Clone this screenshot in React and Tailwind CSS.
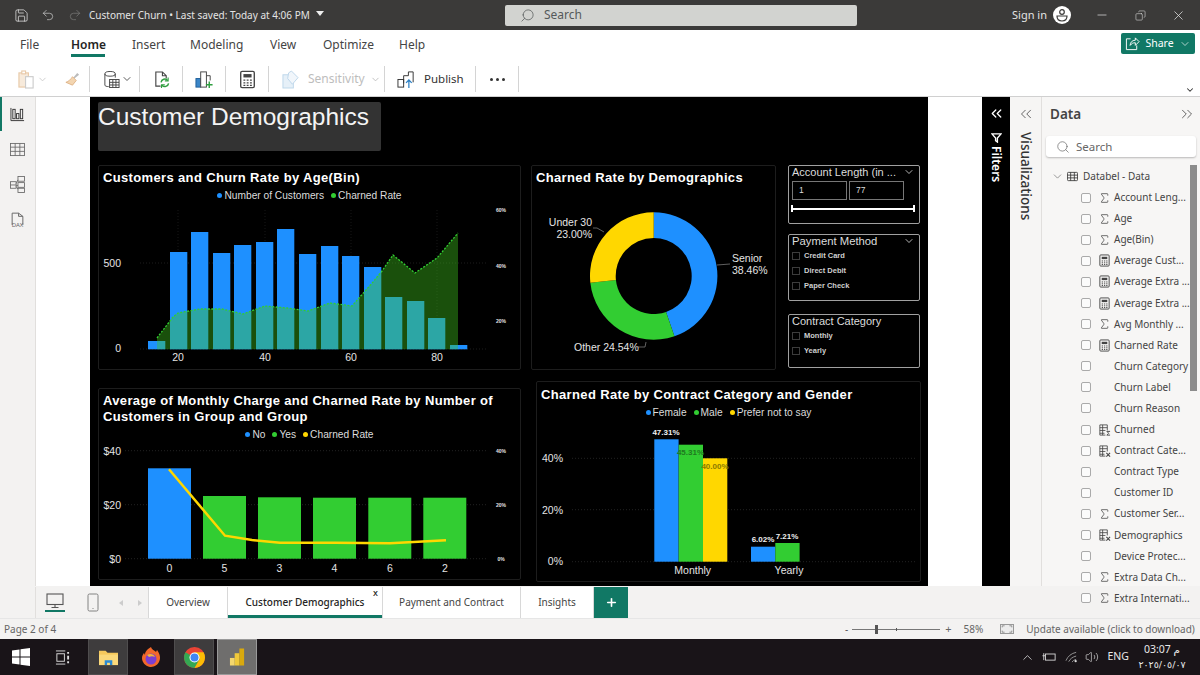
import { ChevronDown, ChevronUp, ChevronsLeft, ChevronsRight, Copy, Minus, Plus, Redo2, Save, Search, Sigma, Undo2, Volume2, X } from 'lucide-react';

const BLUE = '#1e90ff';
const GREEN = '#32cd32';
const YELLOW = '#ffd700';

const ageBars = [
  [148, 341], [170, 252], [191, 232], [213, 253], [234, 245], [256, 242], [277, 229], [299, 254],
  [321, 246], [342, 256], [364, 267], [385, 297], [407, 301], [428, 318], [450, 345],
];
const areaPoints = [
  [157, 338], [173, 317], [178, 313], [200, 309], [222, 309], [243, 314], [265, 306], [287, 308],
  [308, 311], [330, 303], [352, 306], [373, 282], [382, 271], [393, 255], [415, 273], [437, 258], [458, 233],
];
const dataFields = [
  ['sigma', 'Account Leng...'], ['sigma', 'Age'], ['sigma', 'Age(Bin)'], ['calc', 'Average Cust...'],
  ['calc', 'Average Extra ...'], ['calc', 'Average Extra ...'], ['sigma', 'Avg Monthly ...'], ['calc', 'Charned Rate'],
  ['', 'Churn Category'], ['', 'Churn Label'], ['', 'Churn Reason'], ['sigmaTable', 'Churned'],
  ['fx', 'Contract Cate...'], ['', 'Contract Type'], ['', 'Customer ID'], ['sigma', 'Customer Ser...'],
  ['fx', 'Demographics'], ['', 'Device Protec...'], ['sigma', 'Extra Data Ch...'], ['sigma', 'Extra Internati...'],
];

/* ---------- small drawn icons ---------- */

function CalcIcon({ className = 'w-[13px] h-[13px]' }) {
  return (
    <svg viewBox="0 0 14 14" className={className} fill="none" stroke="#444" strokeWidth="1">
      <rect x="2" y="1" width="10" height="12" rx="1" />
      <rect x="4" y="3" width="6" height="2.5" fill="#444" stroke="none" />
      <path d="M4 7.5h1.4M6.4 7.5h1.4M8.8 7.5h1.4M4 9.5h1.4M6.4 9.5h1.4M8.8 9.5h1.4M4 11.3h1.4M6.4 11.3h1.4M8.8 11.3h1.4" />
    </svg>
  );
}

function FieldIcon({ kind }) {
  if (kind === 'sigma') return <Sigma className="w-[14px] h-[14px] text-[#444]" strokeWidth={1.4} />;
  if (kind === 'calc') return <CalcIcon />;
  if (kind === 'sigmaTable' || kind === 'fx') {
    return (
      <svg viewBox="0 0 14 14" className="w-[14px] h-[14px]" fill="none" stroke="#444" strokeWidth="0.9">
        <path d="M8 12.5H2V1.5h8v6M2 4.5h8M2 7.5h6M2 10.5h5M5 1.5v11" />
        {kind === 'fx'
          ? <path d="M9 13l4-4M9 9l4 4" strokeWidth="1.2" />
          : <path d="M13 8.5H9.5l2 2-2 2H13" strokeWidth="1" />}
      </svg>
    );
  }
  return null;
}

function ClipboardIcon() {
  return (
    <svg viewBox="0 0 18 20" className="w-[17px] h-[19px]" fill="none" stroke="#e8c9a8" strokeWidth="1.2">
      <rect x="1" y="3" width="10" height="15" fill="#f7eadb" />
      <rect x="8" y="7" width="8" height="12" fill="#fff" stroke="#ccc" />
      <rect x="4" y="1" width="4" height="3" fill="#fff" />
    </svg>
  );
}

function BrushIcon() {
  return (
    <svg viewBox="0 0 18 18" className="w-[17px] h-[17px]" fill="none">
      <path d="M10 7l4-5 2 2-5 4z" fill="#bbb" />
      <path d="M9 6l4 4-4 5-7-3c3-1 5-3 7-6z" fill="#f3d5b0" stroke="#d9a877" strokeWidth="0.8" />
    </svg>
  );
}

function DataIcon() {
  return (
    <svg viewBox="0 0 18 20" className="w-[17px] h-[19px]" fill="none" stroke="#444" strokeWidth="1">
      <path d="M2 4v12c0 1 2 1.5 4 1.500M13 4v4" />
      <ellipse cx="7.500" cy="4" rx="5.500" ry="2.500" />
      <rect x="7" y="10" width="10" height="8.500" fill="#fff" />
      <path d="M7 13h10M7 15.800h10M10.400 10v8.500M13.700 10v8.500" />
    </svg>
  );
}

function RefreshDocIcon() {
  return (
    <svg viewBox="0 0 18 20" className="w-[17px] h-[19px]" fill="none" strokeWidth="1.200">
      <path d="M8 17H3V2h7l4 4v3M10 2v4h4" stroke="#444" />
      <path d="M8.500 13a4 4 0 0 1 7-2M16.500 14a4 4 0 0 1-7 2" stroke="#2e9e3f" strokeWidth="1.500" />
      <path d="M16 8v3.500h-3.500M9 19v-3.500h3.500" stroke="#2e9e3f" />
    </svg>
  );
}

function NewVisualIcon() {
  return (
    <svg viewBox="0 0 20 20" className="w-[19px] h-[19px]" fill="none" strokeWidth="1">
      <rect x="1" y="9" width="5" height="9" fill="#3a86c8" stroke="#1f5f99" />
      <rect x="6" y="2" width="6" height="16" fill="#fff" stroke="#444" />
      <path d="M15 12v7M11.500 15.500h7" stroke="#2e9e3f" strokeWidth="1.500" />
      <path d="M12 6h4v5" stroke="#444" />
    </svg>
  );
}

function SensitivityIcon() {
  return (
    <svg viewBox="0 0 18 20" className="w-[17px] h-[19px]" fill="none" stroke="#bcd6ea" strokeWidth="1">
      <rect x="1" y="5" width="11" height="14" fill="#e6f0f8" />
      <path d="M7 3l3-2 7 7-6 7-5-6z" fill="#f1f6fb" />
    </svg>
  );
}

function PublishIcon() {
  return (
    <svg viewBox="0 0 20 20" className="w-[19px] h-[19px]" fill="none" stroke="#333" strokeWidth="1">
      <rect x="1" y="10" width="6" height="8" />
      <path d="M7 14V6h5V2h5v11" />
      <path d="M12.500 19v-8M9.500 13.500l3-3 3 3" stroke="#2a7fc4" strokeWidth="1.300" />
    </svg>
  );
}

function ShareIcon() {
  return (
    <svg viewBox="0 0 16 16" className="w-[15px] h-[15px]" fill="none" stroke="#fff" strokeWidth="1">
      <path d="M6 3H1.500v11.500h11V10" />
      <path d="M15 6l-4-4v2.500C7.500 4.500 5.500 7 5.500 10c1.500-2 3-2.800 5.500-2.800V10z" />
    </svg>
  );
}

function Avatar() {
  return (
    <svg viewBox="0 0 18 18" className="w-[18px] h-[18px]">
      <circle cx="9" cy="9" r="9" fill="#fff" />
      <circle cx="9" cy="6" r="2.300" fill="none" stroke="#3b3a39" strokeWidth="1.200" />
      <path d="M4 10h10c0 3-2 5-5 5s-5-2-5-5z" fill="none" stroke="#3b3a39" strokeWidth="1.200" />
    </svg>
  );
}

function RailIcon({ kind }) {
  const s = '#666';
  if (kind === 'report') {
    return (
      <svg viewBox="0 0 16 16" className="w-[15px] h-[15px]" fill="none" stroke="#333" strokeWidth="1">
        <path d="M1 1v13.500h14" />
        <rect x="3" y="2.500" width="2.500" height="10" />
        <rect x="7" y="7" width="2.500" height="5.500" />
        <rect x="11" y="2.500" width="2.500" height="10" />
      </svg>
    );
  }
  if (kind === 'table') {
    return (
      <svg viewBox="0 0 16 16" className="w-[15px] h-[15px]" fill="none" stroke={s} strokeWidth="0.900">
        <rect x="0.500" y="1.500" width="15" height="13" />
        <path d="M0.500 5.500h15M0.500 10h15M5.500 1.500v13M10.500 1.500v13" />
      </svg>
    );
  }
  if (kind === 'model') {
    return (
      <svg viewBox="0 0 16 18" className="w-[15px] h-[17px]" fill="none" stroke={s} strokeWidth="0.900">
        <rect x="0.500" y="6" width="6" height="7" />
        <path d="M0.500 9.500h6" />
        <rect x="8.500" y="0.500" width="7" height="5" />
        <rect x="8.500" y="7" width="7" height="5" />
        <rect x="8.500" y="13" width="7" height="4.500" />
        <path d="M6.500 8L8.500 4M6.500 10h2M6.500 11l2 3" />
      </svg>
    );
  }
  return (
    <div className="flex flex-col items-center mt-[2px]">
      <svg viewBox="0 0 14 12" className="w-[15px] h-[13px] -mb-[3px]" fill="none" stroke={s} strokeWidth="0.900">
        <path d="M2 12V1h6l4 3v8M8 1v3h4" />
      </svg>
      <span className="text-[6px] leading-[7px] text-[#666]">DAX</span>
    </div>
  );
}

function TaskTile({ active, children }) {
  return (
    <div className={`w-[40px] h-[36px] flex items-center justify-center ${active ? 'bg-[#6f6e6d] border border-[#9a9a9a]' : 'bg-[#3e3c3d] border border-[#4f4d4e]'}`}>
      {children}
    </div>
  );
}

/* ---------- window chrome ---------- */

function TitleBar() {
  return (
    <div className="h-[30px] shrink-0 bg-[#3b3a39] flex items-center text-[#e4e4e4]">
      <Save className="w-[15px] h-[15px] ml-[14px]" strokeWidth={1.2} />
      <Undo2 className="w-[14px] h-[14px] ml-[12px] text-[#cfcfcf]" strokeWidth={1.2} />
      <Redo2 className="w-[14px] h-[14px] ml-[13px] text-[#7d7c7b]" strokeWidth={1.2} />
      <span className="ml-[7px] w-[227px] text-[10px] whitespace-nowrap">Customer Churn  •  Last saved: Today at 4:06 PM</span>
      <span className="w-0 h-0 border-x-[4px] border-x-transparent border-t-[5px] border-t-[#eee] mb-[4px]" />
      <div className="ml-[181px] w-[352px] h-[21px] bg-[#d2d3d0] rounded-[2px] flex items-center text-[#55595a]">
        <Search className="w-[15px] h-[15px] ml-[15px] -scale-x-100" strokeWidth={1.2} />
        <span className="ml-[9px] text-[12px]">Search</span>
      </div>
      <span className="ml-[155px] text-[11px] w-[41px]">Sign in</span>
      <Avatar />
      <Minus className="w-[14px] h-[14px] ml-[24px]" strokeWidth={1.2} />
      <Copy className="w-[11px] h-[11px] ml-[26px] -scale-x-100" strokeWidth={1.2} />
      <X className="w-[15px] h-[15px] ml-[25px]" strokeWidth={1.2} />
    </div>
  );
}

function RibbonTabs() {
  return (
    <div className="h-[30px] shrink-0 bg-white flex items-start text-[12px] text-[#444] leading-[29px]">
      <span className="ml-[20px] w-[51px]">File</span>
      <span className="w-[61px] h-[27px] relative font-semibold text-[#252423]">
        Home
        <span className="absolute left-0 top-[24px] w-[34px] h-[3px] bg-[#117865]" />
      </span>
      <span className="w-[58px]">Insert</span>
      <span className="w-[80px]">Modeling</span>
      <span className="w-[53px]">View</span>
      <span className="w-[76px]">Optimize</span>
      <span>Help</span>
      <div className="ml-auto mr-[5px] mt-[3px] w-[74px] h-[21px] bg-[#117865] rounded-[2px] flex items-center justify-center gap-[5px] text-white text-[10.5px] leading-none">
        <ShareIcon />
        <span>Share</span>
        <ChevronDown className="w-[12px] h-[12px]" strokeWidth={1.3} />
      </div>
    </div>
  );
}

function ToolGroup({ className, children }) {
  return <div className={`h-[26px] flex items-center border-r border-[#d4d4d4] ${className}`}>{children}</div>;
}

function Toolbar() {
  return (
    <div className="h-[36px] shrink-0 bg-white flex items-center pt-[2px] text-[#333] relative">
      <ToolGroup className="w-[90px] pl-[18px]">
        <ClipboardIcon />
        <ChevronDown className="w-[11px] h-[11px] text-[#ccc] ml-[2px]" />
        <span className="ml-[16px]"><BrushIcon /></span>
      </ToolGroup>
      <ToolGroup className="w-[50px] pl-[13px]">
        <DataIcon />
        <ChevronDown className="w-[12px] h-[12px] ml-[1px]" strokeWidth={1.6} />
      </ToolGroup>
      <ToolGroup className="w-[43px] justify-center"><RefreshDocIcon /></ToolGroup>
      <ToolGroup className="w-[43px] justify-center"><NewVisualIcon /></ToolGroup>
      <ToolGroup className="w-[43px] justify-center"><CalcIcon className="w-[19px] h-[19px]" /></ToolGroup>
      <ToolGroup className="w-[116px] pl-[13px] text-[#bdbdbd] text-[12px]">
        <SensitivityIcon />
        <span className="ml-[9px]">Sensitivity</span>
        <ChevronDown className="w-[11px] h-[11px] ml-[5px]" />
      </ToolGroup>
      <ToolGroup className="w-[91px] pl-[12px] text-[11.5px]">
        <PublishIcon />
        <span className="ml-[8px]">Publish</span>
      </ToolGroup>
      <ToolGroup className="w-[43px] justify-center gap-[3px]">
        <span className="w-[3px] h-[3px] rounded-full bg-[#333]" />
        <span className="w-[3px] h-[3px] rounded-full bg-[#333]" />
        <span className="w-[3px] h-[3px] rounded-full bg-[#333]" />
      </ToolGroup>
      <ChevronDown className="absolute right-[5px] bottom-[1px] w-[10px] h-[10px]" strokeWidth={2.5} />
    </div>
  );
}

function LeftRail() {
  return (
    <div className="w-[36px] shrink-0 bg-[#f3f2f1] border-r border-[#e1dfdd] flex flex-col items-center relative pt-[9px] gap-[19px]">
      <span className="absolute left-0 top-0 w-[2px] h-[34px] bg-[#117865]" />
      <div className="h-[16px] flex items-center"><RailIcon kind="report" /></div>
      <div className="h-[16px] flex items-center"><RailIcon kind="table" /></div>
      <div className="h-[16px] flex items-center"><RailIcon kind="model" /></div>
      <div className="h-[16px] flex items-center"><RailIcon kind="dax" /></div>
    </div>
  );
}

/* ---------- report visuals ---------- */

function Legend({ items, className = '' }) {
  return (
    <div className={`flex justify-center gap-[7px] h-[14px] items-center text-[10.2px] text-[#dcdcdc] leading-none ${className}`}>
      {items.map(([color, label]) => (
        <span key={label} className="flex items-center gap-[2px]">
          <span className="w-[5px] h-[5px] rounded-full" style={{ background: color }} />
          {label}
        </span>
      ))}
    </div>
  );
}

function AxisText({ x, y, anchor = 'middle', size = 10.5, fill = '#e4e4e4', weight = 400, children }) {
  return (
    <text x={x} y={y} textAnchor={anchor} dominantBaseline="central" fontSize={size} fill={fill} fontWeight={weight} fontFamily="Liberation Sans">
      {children}
    </text>
  );
}

function AgeChart() {
  const line = areaPoints.map(p => p.join(',')).join(' ');
  return (
    <svg width="421" height="166" viewBox="99 203 421 166">
      <path d="M140 349H487M140 263H487" stroke="#1c1c1c" strokeDasharray="1 2" />
      <path d="M178 210V349M265 210V349M351 210V349M437 210V349" stroke="#161616" strokeDasharray="1 2" />
      {ageBars.map(([x, top]) => <rect key={x} x={x} y={top} width="17.300" height={349.3 - top} fill={BLUE} />)}
      <polygon points={`157,349.3 ${line} 458,349.3`} fill="#41c81e" fillOpacity="0.4" />
      <polyline points={line} fill="none" stroke={GREEN} strokeWidth="1.300" strokeDasharray="2 1.500" />
      <AxisText x={121} y={263} anchor="end">500</AxisText>
      <AxisText x={121} y={348} anchor="end">0</AxisText>
      {[[178, 20], [265, 40], [351, 60], [437, 80]].map(([x, t]) => <AxisText key={t} x={x} y={357}>{t}</AxisText>)}
      {[[210, '60%'], [266, '40%'], [321, '20%']].map(([y, t]) => <AxisText key={t} x={501} y={y} size={5} weight={700}>{t}</AxisText>)}
    </svg>
  );
}

function donutSlice(cx, cy, r, ir, from, to) {
  const pt = (rad, deg) => {
    const a = (deg - 90) * Math.PI / 180;
    return `${(cx + rad * Math.cos(a)).toFixed(2)} ${(cy + rad * Math.sin(a)).toFixed(2)}`;
  };
  const large = to - from > 180 ? 1 : 0;
  return `M${pt(r, from)}A${r} ${r} 0 ${large} 1 ${pt(r, to)}L${pt(ir, to)}A${ir} ${ir} 0 ${large} 0 ${pt(ir, from)}Z`;
}

function DonutChart() {
  return (
    <svg width="243" height="180" viewBox="532 189 243 180">
      <path d={donutSlice(653.7, 276, 63.7, 38, 0, 161)} fill={BLUE} />
      <path d={donutSlice(653.7, 276, 63.7, 38, 161, 264)} fill={GREEN} />
      <path d={donutSlice(653.7, 276, 63.7, 38, 264, 360)} fill={YELLOW} />
      <path d="M593 228L597 228L604 232M717 265L730 264M638 347H645L646 342" fill="none" stroke="#777" strokeWidth="0.800" />
      <AxisText x={592} y={222} anchor="end">Under 30</AxisText>
      <AxisText x={592} y={233.5} anchor="end">23.00%</AxisText>
      <AxisText x={732} y={258} anchor="start">Senior</AxisText>
      <AxisText x={732} y={270} anchor="start">38.46%</AxisText>
      <AxisText x={574} y={347} anchor="start">Other 24.54%</AxisText>
    </svg>
  );
}

function ChargeChart() {
  const bars = [[148, 468.3, BLUE], [203, 496, GREEN], [258, 497.3, GREEN], [313, 497.7, GREEN], [368.3, 497.7, GREEN], [423.3, 497.7, GREEN]];
  const labels = ['0', '5', '3', '4', '6', '2'];
  return (
    <svg width="421" height="137" viewBox="99 442 421 137">
      <path d="M125 450.700H487M125 504.700H487M125 558.700H487" stroke="#222" strokeDasharray="1 2" />
      {bars.map(([x, top, color]) => <rect key={x} x={x} y={top} width="43" height={558.7 - top} fill={color} />)}
      <polyline points="169,469.300 225,535.700 252,540 280,542.700 335,542.700 390,543.300 446,540.300" fill="none" stroke={YELLOW} strokeWidth="2.500" />
      {[[450.7, '$40'], [504.7, '$20'], [558.7, '$0']].map(([y, t]) => <AxisText key={t} x={121} y={y} anchor="end">{t}</AxisText>)}
      {bars.map(([x], i) => <AxisText key={x} x={x + 21.5} y={567.7}>{labels[i]}</AxisText>)}
      {[[450.7, '40%'], [505, '20%'], [558.7, '0%']].map(([y, t]) => <AxisText key={t} x={501} y={y} size={5} weight={700}>{t}</AxisText>)}
    </svg>
  );
}

function GenderChart() {
  const bars = [[654.3, 439.3, BLUE], [678.7, 444.7, GREEN], [703, 458.3, YELLOW], [751, 546.7, BLUE], [775.3, 543, GREEN]];
  const vals = [[666, 432, '47.31%', '#f0f0f0'], [690.5, 452, '45.31%', '#1f7a1f'], [715, 466, '40.00%', '#8a7a00'], [763, 539.5, '6.02%', '#f0f0f0'], [787, 536, '7.21%', '#f0f0f0']];
  return (
    <svg width="383" height="161" viewBox="537 420 383 161">
      <path d="M572 458.300H915M572 509.700H915M572 561.700H915" stroke="#222" strokeDasharray="1 2" />
      {bars.map(([x, top, color]) => <rect key={x} x={x} y={top} width="24.300" height={561.7 - top} fill={color} />)}
      {vals.map(([x, y, t, c]) => <AxisText key={t} x={x} y={y} size={8} weight={700} fill={c}>{t}</AxisText>)}
      {[[458, '40%'], [509.7, '20%'], [561, '0%']].map(([y, t]) => <AxisText key={t} x={563} y={y} anchor="end">{t}</AxisText>)}
      <AxisText x={692.7} y={570}>Monthly</AxisText>
      <AxisText x={789} y={570}>Yearly</AxisText>
    </svg>
  );
}

function SlicerOption({ label }) {
  return (
    <div className="h-[15px] flex items-center gap-[4px] text-[7.5px] font-bold text-[#cfcfcf]">
      <span className="w-[8px] h-[8px] border border-[#3c3c3c]" />
      {label}
    </div>
  );
}

function Slicers() {
  const box = 'border border-[#a0a0a0] rounded-[2px] w-[132px] px-[3px] text-[#dcdcdc]';
  return (
    <div className="ml-[12px] flex flex-col">
      <div className={`${box} h-[59px]`}>
        <div className="flex items-center justify-between h-[12px] text-[11px] whitespace-nowrap">
          Account Length (in ...
          <ChevronDown className="w-[12px] h-[12px] mr-[1px] text-white" strokeWidth={1.4} />
        </div>
        <div className="flex gap-[2px] mt-[3px] text-[8.5px]">
          <span className="w-[55px] h-[19px] border border-[#777] pl-[6px] leading-[17px]">1</span>
          <span className="w-[55px] h-[19px] border border-[#777] pl-[6px] leading-[17px]">77</span>
        </div>
        <div className="mt-[5px] -ml-[1px] mr-[1px] h-[7px] border-x-2 border-white flex items-center">
          <span className="w-full h-[2px] bg-white" />
        </div>
      </div>
      <div className={`${box} h-[67px] mt-[10px]`}>
        <div className="flex items-center justify-between h-[12px] text-[11.3px] mb-[1px]">
          Payment Method
          <ChevronDown className="w-[12px] h-[12px] mr-[1px] text-white" strokeWidth={1.4} />
        </div>
        <SlicerOption label="Credit Card" />
        <SlicerOption label="Direct Debit" />
        <SlicerOption label="Paper Check" />
      </div>
      <div className={`${box} h-[54px] mt-[13px]`}>
        <div className="h-[12px] text-[11px] mb-[1px] leading-[12px]">Contract Category</div>
        <SlicerOption label="Monthly" />
        <SlicerOption label="Yearly" />
      </div>
    </div>
  );
}

function VisualTitle({ children }) {
  return <h3 className="text-[13px] leading-[16px] font-bold text-white tracking-[0.35px]">{children}</h3>;
}

function Canvas() {
  const frame = 'border border-[#1d1d1d] rounded-[2px]';
  return (
    <div className="w-[838px] h-full bg-black pl-[8px] pt-[5px] font-['Liberation_Sans',Arial,sans-serif]">
      <div className="w-[283px] h-[49px] bg-[#333333] rounded-[2px] text-[24.5px] leading-[30px] text-[#f4f4f4]">Customer Demographics</div>
      <div className="flex mt-[14px]">
        <div className="w-[423px] flex flex-col">
          <div className={`${frame} h-[205px]`}>
            <div className="px-[4px] pt-[4px]"><VisualTitle>Customers and Churn Rate by Age(Bin)</VisualTitle></div>
            <Legend className="mt-[3px]" items={[[BLUE, 'Number of Customers'], [GREEN, 'Charned Rate']]} />
            <AgeChart />
          </div>
          <div className={`${frame} h-[192px] mt-[18px]`}>
            <div className="px-[4px] pt-[4px]">
              <VisualTitle>Average of Monthly Charge and Charned Rate by Number of Customers in Group and Group</VisualTitle>
            </div>
            <Legend className="mt-[3px]" items={[[BLUE, 'No'], [GREEN, 'Yes'], [YELLOW, 'Charned Rate']]} />
            <ChargeChart />
          </div>
        </div>
        <div className="ml-[10px] flex flex-col">
          <div className="flex">
            <div className={`${frame} w-[245px] h-[205px]`}>
              <div className="px-[4px] pt-[4px]"><VisualTitle>Charned Rate by Demographics</VisualTitle></div>
              <div className="h-[3px]" />
              <DonutChart />
            </div>
            <Slicers />
          </div>
          <div className={`${frame} w-[385px] h-[201px] ml-[5px] mt-[11px]`}>
            <div className="px-[4px] pt-[5px]"><VisualTitle>Charned Rate by Contract Category and Gender</VisualTitle></div>
            <Legend className="mt-[3px]" items={[[BLUE, 'Female'], [GREEN, 'Male'], [YELLOW, 'Prefer not to say']]} />
            <GenderChart />
          </div>
        </div>
      </div>
    </div>
  );
}

function FiltersStrip() {
  return (
    <div className="w-[28px] shrink-0 bg-black text-white flex flex-col items-center pt-[8px]">
      <ChevronsLeft className="w-[17px] h-[17px]" strokeWidth={1.8} />
      <svg viewBox="0 0 12 12" className="w-[11px] h-[11px] mt-[10px]" fill="none" stroke="#fff" strokeWidth="1.500">
        <path d="M1 2h10L7 6.500V11L5 9.500v-3z" />
      </svg>
      <span className="[writing-mode:vertical-rl] text-[12px] font-semibold mt-[3px] leading-none">Filters</span>
    </div>
  );
}

function VizStrip() {
  return (
    <div className="w-[32px] shrink-0 bg-[#f6f5f4] border-r border-[#e1dfdd] flex flex-col items-center pt-[8px] text-[#333]">
      <ChevronsLeft className="w-[18px] h-[18px] text-[#555]" strokeWidth={1.2} />
      <span className="[writing-mode:vertical-rl] text-[13.5px] font-medium mt-[9px] leading-none">Visualizations</span>
    </div>
  );
}

function DataPane() {
  return (
    <div className="flex-1 bg-[#f7f6f5] flex flex-col relative text-[#444]">
      <div className="h-[39px] flex items-center px-[8px] pb-[5px] justify-between shrink-0">
        <span className="text-[13.5px] font-semibold">Data</span>
        <ChevronsRight className="w-[18px] h-[18px] mr-[-4px] text-[#555]" strokeWidth={1.2} />
      </div>
      <div className="mx-[4px] h-[21px] bg-white rounded-[3px] shadow-[0_1px_2px_rgba(0,0,0,0.25)] flex items-center shrink-0 text-[#666]">
        <Search className="w-[14px] h-[14px] ml-[10px]" strokeWidth={1.2} />
        <span className="ml-[6px] text-[11.5px]">Search</span>
      </div>
      <div className="flex items-center h-[21px] mt-[9px] shrink-0 text-[10px]">
        <ChevronDown className="w-[13px] h-[13px] ml-[9px] text-[#666]" strokeWidth={1.2} />
        <svg viewBox="0 0 12 12" className="w-[11px] h-[11px] ml-[3px]" fill="none" stroke="#333" strokeWidth="0.900">
          <rect x="0.500" y="1.500" width="11" height="9" rx="1" />
          <path d="M0.500 4.500h11M0.500 7.500h11M4 1.500v9M8 1.500v9" />
        </svg>
        <span className="ml-[5px]">Databel - Data</span>
      </div>
      {dataFields.map(([kind, label], i) => (
        <div key={i} className="flex items-center h-[21.1px] shrink-0 text-[10px] whitespace-nowrap">
          <span className="w-[10px] h-[10px] ml-[39px] border border-[#aaa] rounded-[2px] bg-[#fbfbfb]" />
          <span className="w-[13px] h-[14px] ml-[7px] flex items-center"><FieldIcon kind={kind} /></span>
          <span className="ml-[3px]">{label}</span>
        </div>
      ))}
      <span className="absolute left-[148px] top-[68px] w-[7px] h-[226px] bg-[#8c8c8c]" />
    </div>
  );
}

function PageTabs() {
  const tab = 'h-full flex items-center justify-center bg-white border-r border-[#d8d8d8] text-[10px] text-[#444]';
  return (
    <div className="h-[33px] shrink-0 bg-[#f3f2f1] flex items-start pt-[1px] border-b border-[#e6e6e6]">
      <div className="w-[36px] h-full border-r border-[#e1dfdd] shrink-0" />
      <div className="w-[112px] h-[31px] flex items-center shrink-0">
        <div className="ml-[9px] flex flex-col items-center">
          <svg viewBox="0 0 18 16" className="w-[18px] h-[16px]" fill="none" stroke="#555" strokeWidth="1.100">
            <rect x="1" y="1" width="16" height="10.500" />
            <path d="M9 11.500v3M5.500 14.500h7" />
          </svg>
          <span className="w-[20px] h-[2px] bg-[#117865] mt-[1px]" />
        </div>
        <svg viewBox="0 0 12 18" className="w-[12px] h-[19px] ml-[22px]" fill="none" stroke="#777" strokeWidth="0.900">
          <rect x="1" y="0.500" width="10" height="17" rx="1.500" />
          <path d="M5.500 15h1" />
        </svg>
        <span className="ml-[20px] w-0 h-0 border-y-[3px] border-y-transparent border-r-[4px] border-r-[#ccc]" />
        <span className="ml-[15px] w-0 h-0 border-y-[3px] border-y-transparent border-l-[4px] border-l-[#ccc]" />
      </div>
      <div className="flex h-[31px] border-l border-[#d8d8d8]">
        <div className={`${tab} w-[79px]`}>Overview</div>
        <div className={`${tab} w-[155px] relative font-medium text-[#252423]`}>
          Customer Demographics
          <span className="absolute right-[4px] top-[1px] text-[9px] leading-[10px]">x</span>
          <span className="absolute left-0 right-0 bottom-0 h-[3px] bg-[#117865]" />
        </div>
        <div className={`${tab} w-[138px]`}>Payment and Contract</div>
        <div className={`${tab} w-[73px]`}>Insights</div>
        <div className="w-[34px] h-full bg-[#117865] flex items-center justify-center">
          <Plus className="w-[13px] h-[13px] text-white" strokeWidth={3} />
        </div>
      </div>
    </div>
  );
}

function StatusBar() {
  return (
    <div className="h-[20px] shrink-0 bg-[#f3f2f1] flex items-center text-[10px] text-[#666]">
      <span className="ml-[4px] w-[841px] whitespace-nowrap">Page 2 of 4</span>
      <span className="text-[#555]">-</span>
      <div className="ml-[4px] w-[88px] h-[1px] bg-[#777] relative">
        <span className="absolute left-[23px] -top-[4px] w-[3px] h-[9px] bg-[#555]" />
        <span className="absolute left-[44px] -top-[1px] w-px h-[3px] bg-[#555]" />
      </div>
      <span className="ml-[5px] text-[11px]">+</span>
      <span className="ml-[12px]">58%</span>
      <svg viewBox="0 0 14 10" className="ml-[17px] w-[14px] h-[10px] bg-[#ececec] border border-[#999]" fill="none" stroke="#666" strokeWidth="0.800">
        <path d="M1 3V1h3M10 1h3v2M13 7v2h-3M4 9H1V7" />
      </svg>
      <span className="ml-[12px] whitespace-nowrap">Update available (click to download)</span>
    </div>
  );
}

function TaskBar() {
  return (
    <div className="h-[36px] shrink-0 bg-[#191418] flex items-center text-[#e8e8e8] font-['DejaVu_Sans',sans-serif]">
      <svg viewBox="0 0 18 18" className="w-[18px] h-[18px] ml-[12px]" fill="#fff">
        <path d="M0 2.500l7.500-1v7H0zM8.500 1.300L18 0v8.500H8.500zM0 9.500h7.500v7l-7.500-1zM8.500 9.500H18V18l-9.500-1.300z" />
      </svg>
      <svg viewBox="0 0 16 16" className="w-[15px] h-[15px] ml-[25px]" fill="none" stroke="#ddd" strokeWidth="1">
        <path d="M1 1h10M1 15h10" />
        <rect x="2" y="4" width="8" height="8" />
        <path d="M14 2v2M14 6v4M14 12v2" strokeWidth="2" />
      </svg>
      <div className="ml-[18px]">
        <TaskTile>
          <svg viewBox="0 0 22 20" className="w-[21px] h-[19px]">
            <path d="M1 3h7l2 2h11v13H1z" fill="#f6c95c" />
            <path d="M1 7h20v11H1z" fill="#fbd97a" />
            <path d="M7 18v-5h8v5h-2.500v-2.500h-3V18z" fill="#2a8ad4" />
          </svg>
        </TaskTile>
      </div>
      <div className="w-[46px] flex justify-center">
        <svg viewBox="0 0 20 22" className="w-[20px] h-[22px]">
          <path d="M10 1c1 3 3 3 5 5l1-2c3 4 4 8 2 12-2 4-6 5-9 5-5-1-8-5-8-9 0-2 1-4 2-5l1 2c0-4 3-6 6-8z" fill="#f2682a" />
          <circle cx="10" cy="13" r="5.500" fill="#7b3fd1" />
          <path d="M6 9c3-2 7-1 8 2-2-1-4-1-6 0z" fill="#f7b733" />
        </svg>
      </div>
      <TaskTile>
        <svg viewBox="0 0 20 20" className="w-[21px] h-[21px]">
          <circle cx="10" cy="10" r="10" fill="#ea4335" />
          <path d="M10 10L1.340 5A10 10 0 0 0 10 20l5-8.660z" fill="#34a853" />
          <path d="M10 10l5 1.340L10 20A10 10 0 0 0 18.660 5H10z" fill="#fbbc05" />
          <circle cx="10" cy="10" r="4.800" fill="#fff" />
          <circle cx="10" cy="10" r="3.800" fill="#4285f4" />
        </svg>
      </TaskTile>
      <div className="ml-[3px]">
        <TaskTile active>
          <svg viewBox="0 0 18 20" className="w-[17px] h-[20px]">
            <rect x="1" y="11" width="5" height="8" fill="#f5d76e" />
            <rect x="6" y="6" width="5" height="13" fill="#f0c93a" />
            <rect x="11" y="1" width="5" height="18" fill="#d9a90e" />
          </svg>
        </TaskTile>
      </div>
      <div className="ml-auto flex items-center text-[10px] h-full">
        <ChevronUp className="w-[15px] h-[15px]" strokeWidth={1.2} />
        <svg viewBox="0 0 16 12" className="w-[14px] h-[11px] ml-[7px]" fill="none" stroke="#ddd" strokeWidth="1">
          <rect x="4" y="2" width="11" height="7" />
          <path d="M2 1v8M0.500 4h3" />
        </svg>
        <svg viewBox="0 0 14 12" className="w-[13px] h-[12px] ml-[9px]" fill="none" stroke="#999" strokeWidth="1">
          <path d="M1 10C3 5 7 2 12 1M4 11c1.500-3 4-5 8-6M7.500 11.500c1-1.500 2.500-2.500 4.500-3" />
          <circle cx="11.500" cy="10.500" r="1.200" fill="#ddd" stroke="none" />
        </svg>
        <Volume2 className="w-[14px] h-[14px] ml-[7px]" strokeWidth={1.1} />
        <span className="ml-[9px] font-['Noto_Sans',sans-serif] text-[10.5px]">ENG</span>
        <div className="w-[66px] mr-[5px] flex flex-col items-center leading-[16px] text-[9.5px]">
          <span className="font-['Noto_Sans','DejaVu_Sans',sans-serif] text-[10.5px]">03:07 م</span>
          <span dir="ltr">٢٠٢٥/٠٥/٠٧</span>
        </div>
      </div>
    </div>
  );
}

export default function App() {
  return (
    <div className="w-[1200px] h-[675px] overflow-hidden flex flex-col bg-white font-['Noto_Sans',sans-serif]">
      <TitleBar />
      <RibbonTabs />
      <Toolbar />
      <div className="h-[490px] shrink-0 flex border-t border-[#d0d0d0]">
        <LeftRail />
        <div className="w-[946px] shrink-0 bg-white pl-[54px] flex">
          <Canvas />
        </div>
        <FiltersStrip />
        <VizStrip />
        <DataPane />
      </div>
      <PageTabs />
      <StatusBar />
      <TaskBar />
    </div>
  );
}
